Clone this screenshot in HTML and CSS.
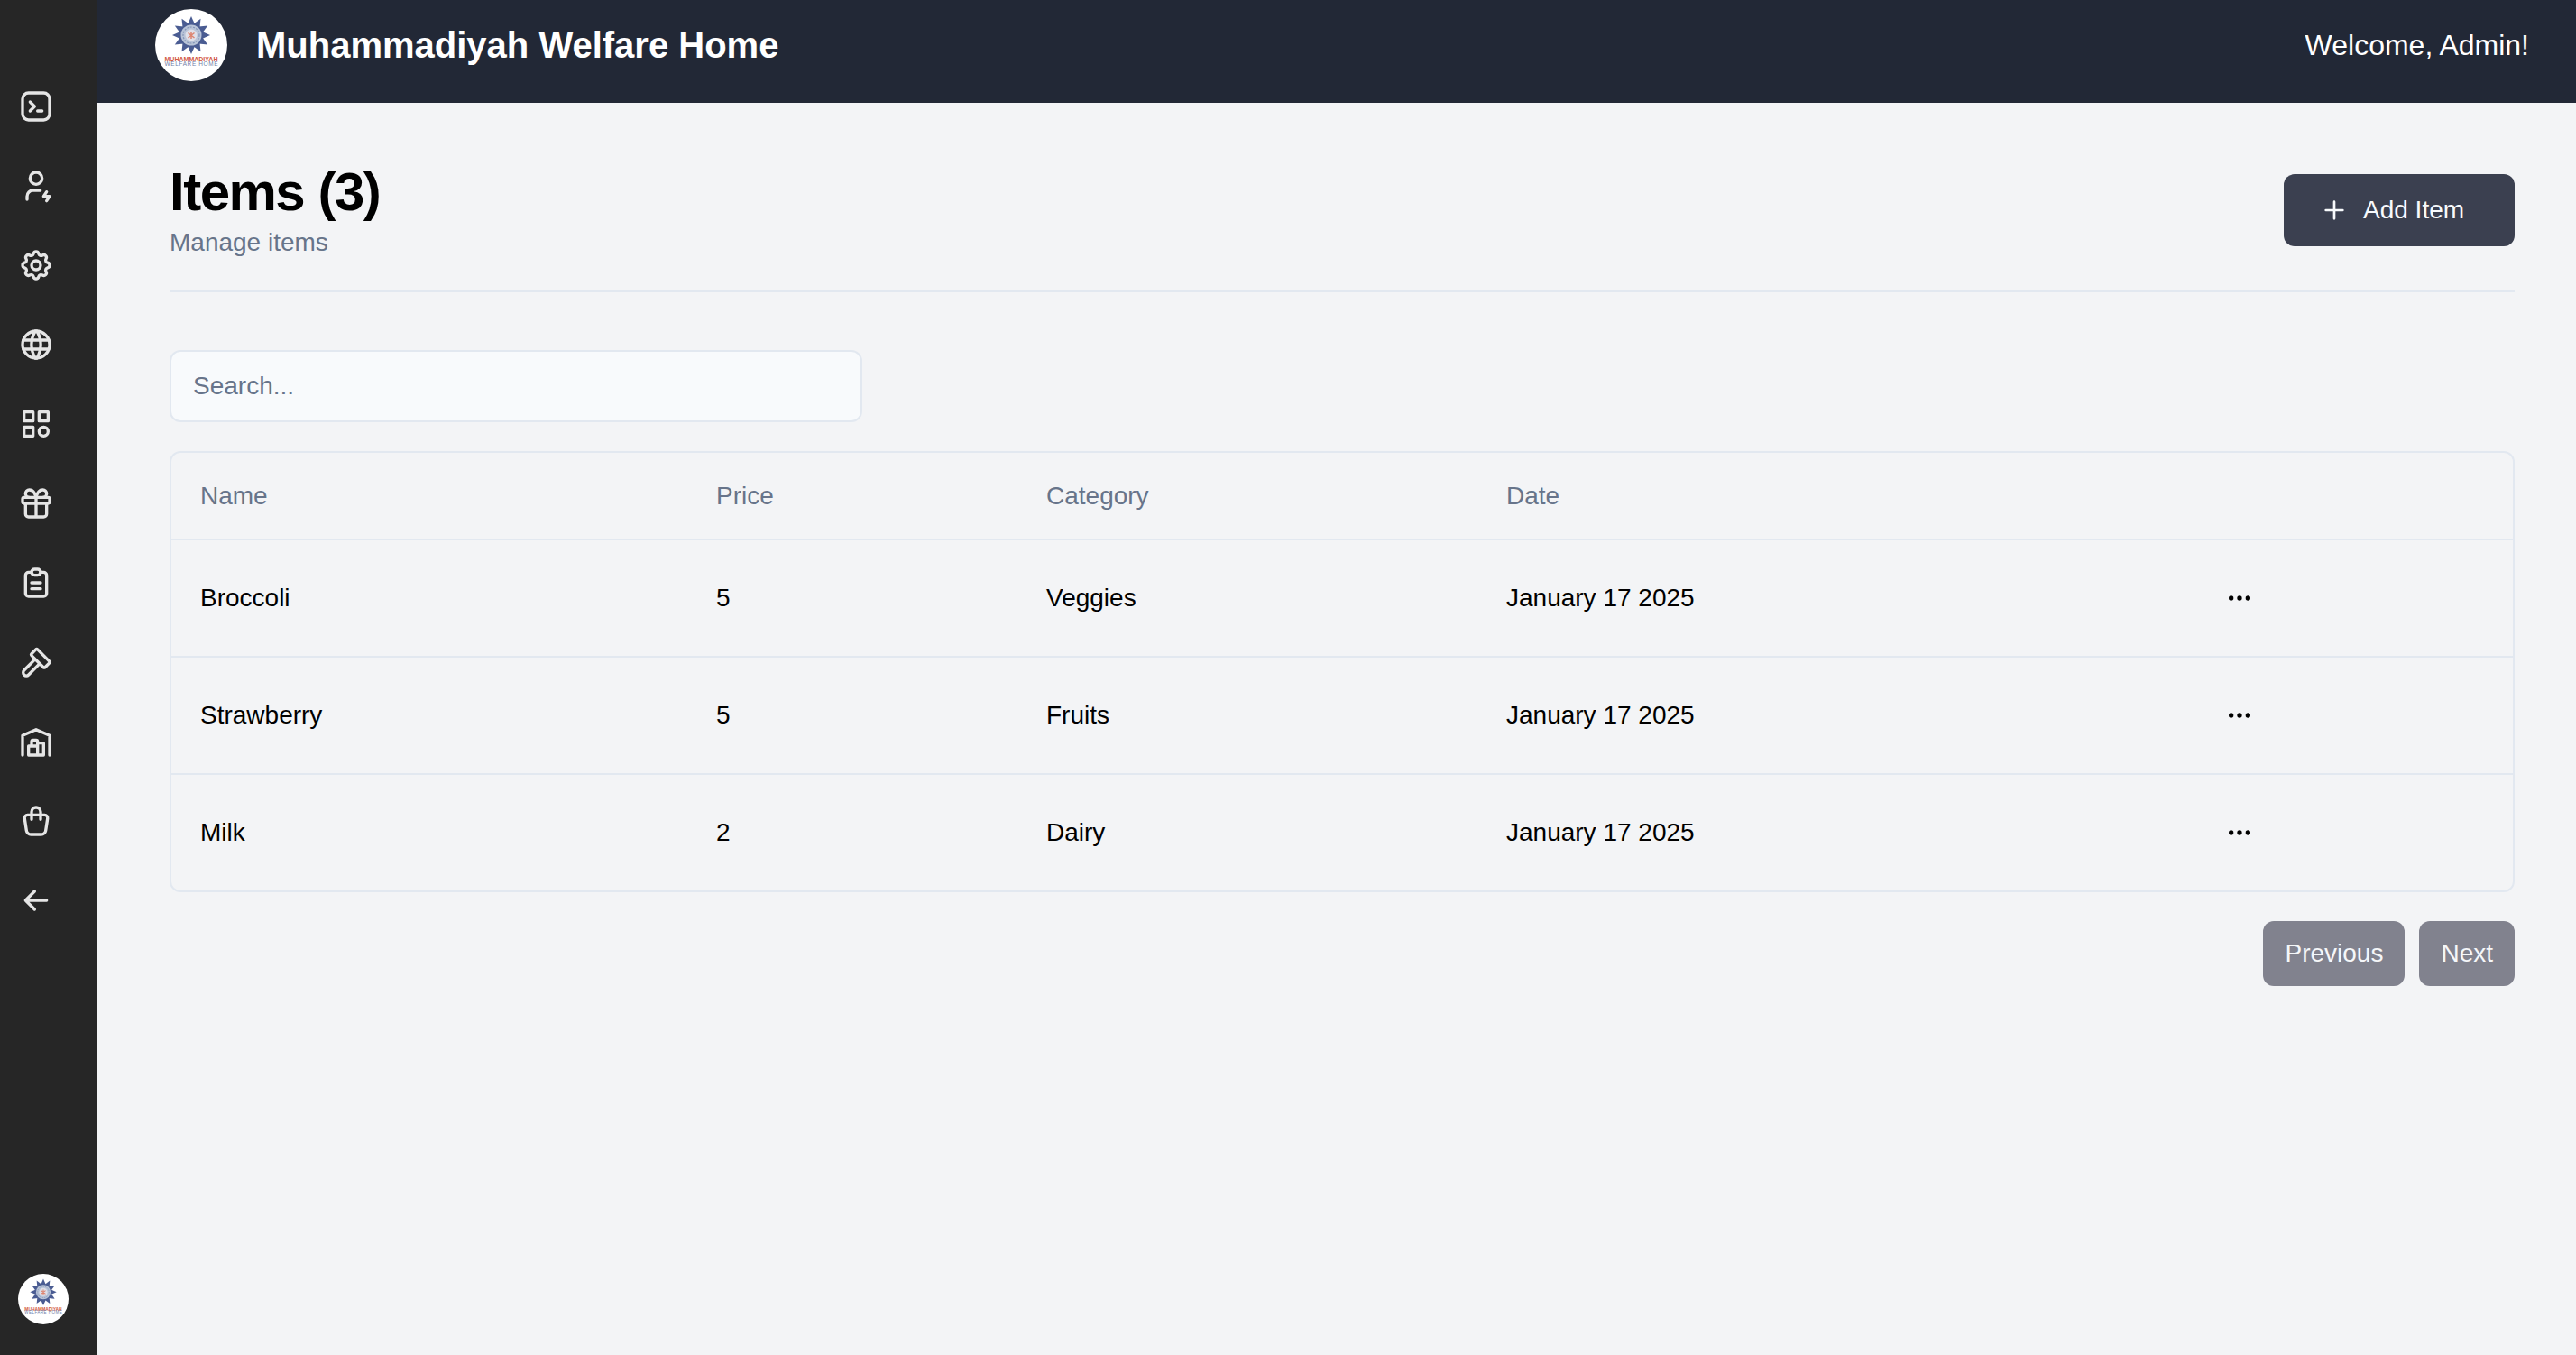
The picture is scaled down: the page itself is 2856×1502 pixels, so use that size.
FILE: index.html
```html
<!DOCTYPE html>
<html lang="en">
<head>
<meta charset="utf-8">
<title>Muhammadiyah Welfare Home</title>
<link rel="stylesheet" href="styles.css">
</head>
<body>
<svg class="defs" aria-hidden="true">
  <symbol id="logo" viewBox="0 0 80 80">
    <circle cx="40" cy="40" r="40" fill="#fff"/>
    <g transform="translate(40 29)">
      <g fill="#4a5c92">
        <path id="ray" d="M-4-12 0-21 4-12Z"/>
        <use href="#ray" transform="rotate(30)"/><use href="#ray" transform="rotate(60)"/>
        <use href="#ray" transform="rotate(90)"/><use href="#ray" transform="rotate(120)"/>
        <use href="#ray" transform="rotate(150)"/><use href="#ray" transform="rotate(180)"/>
        <use href="#ray" transform="rotate(210)"/><use href="#ray" transform="rotate(240)"/>
        <use href="#ray" transform="rotate(270)"/><use href="#ray" transform="rotate(300)"/>
        <use href="#ray" transform="rotate(330)"/>
        <circle r="13"/>
      </g>
      <circle r="11.5" fill="#b9c4d8"/>
      <circle r="9" fill="none" stroke="#8596b8" stroke-width="1.2" stroke-dasharray="2 1.4"/>
      <circle r="6.5" fill="#dfdfe8"/>
      <path d="M-3.5-2.5 3.5 3M3.5-2.5-3.5 3M0-4V4" stroke="#dd8470" stroke-width="1.5"/>
    </g>
    <text x="40" y="58" text-anchor="middle" textLength="59" lengthAdjust="spacingAndGlyphs" class="logo-name">MUHAMMADIYAH</text>
    <text x="40" y="63.2" text-anchor="middle" textLength="59" lengthAdjust="spacing" class="logo-sub">WELFARE HOME</text>
  </symbol>
  <symbol id="dots" viewBox="0 0 24 24">
    <circle cx="5" cy="12" r="2"/><circle cx="12" cy="12" r="2"/><circle cx="19" cy="12" r="2"/>
  </symbol>
</svg>
<div class="app">
  <aside class="sidebar">
    <nav class="nav">
      <svg class="icon" viewBox="0 0 24 24"><path d="M8 9l3 3-3 3M13 15h3"/><rect x="3" y="3" width="18" height="18" rx="4"/></svg>
      <svg class="icon" viewBox="0 0 24 24"><path d="M8 7a4 4 0 1 0 8 0a4 4 0 0 0-8 0M6 21v-2a4 4 0 0 1 4-4h4c.267 0 .529.026.781.076M19 16l-2 3h4l-2 3"/></svg>
      <svg class="icon" viewBox="0 0 24 24"><path d="M10.325 4.317c.426-1.756 2.924-1.756 3.35 0a1.724 1.724 0 0 0 2.573 1.066c1.543-.94 3.31.826 2.37 2.37a1.724 1.724 0 0 0 1.065 2.572c1.756.426 1.756 2.924 0 3.35a1.724 1.724 0 0 0-1.066 2.573c.94 1.543-.826 3.31-2.37 2.37a1.724 1.724 0 0 0-2.572 1.065c-.426 1.756-2.924 1.756-3.35 0a1.724 1.724 0 0 0-2.573-1.066c-1.543.94-3.31-.826-2.37-2.37a1.724 1.724 0 0 0-1.065-2.572c-1.756-.426-1.756-2.924 0-3.35a1.724 1.724 0 0 0 1.066-2.573c-.94-1.543.826-3.31 2.37-2.37c1 .608 2.296.07 2.572-1.065z"/><circle cx="12" cy="12" r="3"/></svg>
      <svg class="icon" viewBox="0 0 24 24"><circle cx="12" cy="12" r="9"/><path d="M3.6 9h16.8M3.6 15h16.8M11.5 3a17 17 0 0 0 0 18M12.5 3a17 17 0 0 1 0 18"/></svg>
      <svg class="icon" viewBox="0 0 24 24"><path d="M4 4h6v6h-6zM14 4h6v6h-6zM4 14h6v6h-6z"/><circle cx="17" cy="17" r="3"/></svg>
      <svg class="icon" viewBox="0 0 24 24"><rect x="3" y="8" width="18" height="4" rx="1"/><path d="M12 8v13M19 12v7a2 2 0 0 1-2 2h-10a2 2 0 0 1-2-2v-7M7.5 8a2.5 2.5 0 0 1 0-5a4.8 8 0 0 1 4.5 5a4.8 8 0 0 1 4.5-5a2.5 2.5 0 0 1 0 5"/></svg>
      <svg class="icon" viewBox="0 0 24 24"><path d="M9 5h-2a2 2 0 0 0-2 2v12a2 2 0 0 0 2 2h10a2 2 0 0 0 2-2v-12a2 2 0 0 0-2-2h-2M9 12h6M9 16h6"/><rect x="9" y="3" width="6" height="4" rx="2"/></svg>
      <svg class="icon" viewBox="0 0 24 24"><path d="M11.414 10l-7.383 7.418a2.091 2.091 0 0 0 0 2.967a2.11 2.11 0 0 0 2.976 0l7.407-7.385M18.121 15.293l2.586-2.586a1 1 0 0 0 0-1.414l-7.586-7.586a1 1 0 0 0-1.414 0l-2.586 2.586a1 1 0 0 0 0 1.414l7.586 7.586a1 1 0 0 0 1.414 0z"/></svg>
      <svg class="icon" viewBox="0 0 24 24"><path d="M3 21v-13l9-4 9 4v13M13 13h4v8h-10v-6h6M13 21v-9a1 1 0 0 0-1-1h-2a1 1 0 0 0-1 1v3"/></svg>
      <svg class="icon" viewBox="0 0 24 24"><path d="M6.331 8h11.339a2 2 0 0 1 1.977 2.304l-1.255 8.152a3 3 0 0 1-2.966 2.544h-6.852a3 3 0 0 1-2.965-2.544l-1.255-8.152a2 2 0 0 1 1.977-2.304zM9 11v-5a3 3 0 0 1 6 0v5"/></svg>
      <svg class="icon" viewBox="0 0 24 24"><path d="M5 12h14M5 12l6 6M5 12l6-6"/></svg>
    </nav>
    <svg class="avatar"><use href="#logo"/></svg>
  </aside>
  <div class="main">
    <header class="header">
      <svg class="logo"><use href="#logo"/></svg>
      <h1 class="brand">Muhammadiyah Welfare Home</h1>
      <span class="welcome">Welcome, Admin!</span>
    </header>
    <main class="content">
      <div class="heading">
        <div>
          <h2 class="title">Items (3)</h2>
          <p class="subtitle">Manage items</p>
        </div>
        <button class="btn add"><svg class="plus" viewBox="0 0 24 24"><path d="M5 12h14M12 5v14"/></svg>Add Item</button>
      </div>
      <input class="search" type="text" placeholder="Search...">
      <div class="table">
        <div class="row head"><span>Name</span><span>Price</span><span>Category</span><span>Date</span><span></span></div>
        <div class="row"><span>Broccoli</span><span>5</span><span>Veggies</span><span>January 17 2025</span><svg class="dots"><use href="#dots"/></svg></div>
        <div class="row"><span>Strawberry</span><span>5</span><span>Fruits</span><span>January 17 2025</span><svg class="dots"><use href="#dots"/></svg></div>
        <div class="row"><span>Milk</span><span>2</span><span>Dairy</span><span>January 17 2025</span><svg class="dots"><use href="#dots"/></svg></div>
      </div>
      <div class="pager">
        <button class="btn page" disabled>Previous</button>
        <button class="btn page" disabled>Next</button>
      </div>
    </main>
  </div>
</div>
</body>
</html>
```
FILE: styles.css
```css
* { box-sizing: border-box; margin: 0; }
body { font-family: "Liberation Sans", Arial, sans-serif; font-size: 28px; line-height: 40px; color: #000; background: #f3f4f6; }
.defs { display: none; }
.app { display: flex; height: 100vh; overflow: hidden; }

.sidebar { width: 108px; flex: none; background: #262626; display: flex; flex-direction: column; justify-content: space-between; padding: 98px 20px 34px 24px; padding-left: 20px; }
.nav { display: flex; flex-direction: column; gap: 48px; }
.icon { width: 40px; height: 40px; fill: none; stroke: #e5e5e5; stroke-width: 2; stroke-linecap: round; stroke-linejoin: round; }
.avatar { width: 56px; height: 56px; }
.logo-name { font-size: 7.4px; font-weight: 700; fill: #d2583f; }
.logo-sub { font-size: 6.4px; fill: #6f7ca6; }

.main { flex: 1; min-width: 0; }
.header { height: 114px; padding: 10px 52px 24px 64px; display: flex; align-items: center; background: #222836; color: #fff; }
.logo { width: 80px; height: 80px; margin-right: 32px; }
.brand { font-size: 40px; line-height: 56px; font-weight: 700; }
.welcome { margin-left: auto; font-size: 32px; line-height: 48px; }

.content { padding: 64px 68px 0 80px; }
.heading { display: flex; align-items: center; justify-content: space-between; height: 146px; padding-bottom: 34px; border-bottom: 2px solid #e2e8f0; }
.title { font-size: 60px; line-height: 72px; font-weight: 700; letter-spacing: -0.025em; }
.subtitle { color: #67748a; }
.btn { display: flex; align-items: center; border: 0; border-radius: 12px; font: inherit; color: #f8fafc; }
.add { width: 256px; height: 80px; padding: 0 0 0 40px; background: #3b4050; }
.plus { width: 32px; height: 32px; margin-right: 16px; fill: none; stroke: currentColor; stroke-width: 2; stroke-linecap: round; }

.search { display: block; width: 768px; height: 80px; margin: 64px 0 32px; padding: 0 24px; border: 2px solid #e2e8f0; border-radius: 12px; background: #f8fafc; font: inherit; }
.search::placeholder { color: #67748a; opacity: 1; }

.table { border: 2px solid #e2e8f0; border-radius: 12px; }
.row { display: grid; grid-template-columns: 572px 366px 510px 797px 1fr; align-items: center; height: 130px; padding-left: 32px; border-bottom: 2px solid #e2e8f0; }
.row:last-child { height: 128px; border-bottom: 0; }
.head { height: 97px; color: #67748a; }
.dots { width: 32px; height: 32px; }

.pager { display: flex; justify-content: flex-end; gap: 16px; margin-top: 32px; }
.page { height: 72px; padding: 0 24px; background: #121229; opacity: .5; }
```
